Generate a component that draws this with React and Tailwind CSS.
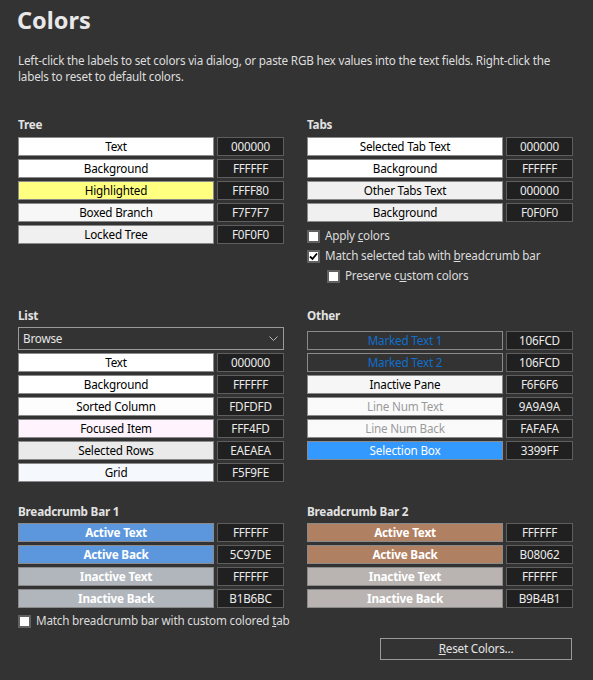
import React from "react";

// Colour swatch data for each group
const treeRows = [
	{ label: "Text", hex: "000000", cls: "bg-white text-black" },
	{ label: "Background", hex: "FFFFFF", cls: "bg-white text-black" },
	{ label: "Highlighted", hex: "FFFF80", cls: "bg-[#ffff80] text-black" },
	{ label: "Boxed Branch", hex: "F7F7F7", cls: "bg-[#f7f7f7] text-black" },
	{ label: "Locked Tree", hex: "F0F0F0", cls: "bg-[#f0f0f0] text-black" },
];

const tabRows = [
	{ label: "Selected Tab Text", hex: "000000", cls: "bg-white text-black" },
	{ label: "Background", hex: "FFFFFF", cls: "bg-white text-black" },
	{ label: "Other Tabs Text", hex: "000000", cls: "bg-[#f0f0f0] text-black" },
	{ label: "Background", hex: "F0F0F0", cls: "bg-[#f0f0f0] text-black" },
];

const listRows = [
	{ label: "Text", hex: "000000", cls: "bg-white text-black" },
	{ label: "Background", hex: "FFFFFF", cls: "bg-white text-black" },
	{ label: "Sorted Column", hex: "FDFDFD", cls: "bg-[#fdfdfd] text-black" },
	{ label: "Focused Item", hex: "FFF4FD", cls: "bg-[#fff4fd] text-black" },
	{ label: "Selected Rows", hex: "EAEAEA", cls: "bg-[#eaeaea] text-black" },
	{ label: "Grid", hex: "F5F9FE", cls: "bg-[#f5f9fe] text-black" },
];

const otherRows = [
	{ label: "Marked Text 1", hex: "106FCD", cls: "bg-[#333333] text-[#106fcd] border-[#5e5e5e]" },
	{ label: "Marked Text 2", hex: "106FCD", cls: "bg-[#333333] text-[#106fcd] border-[#5e5e5e]" },
	{ label: "Inactive Pane", hex: "F6F6F6", cls: "bg-[#f6f6f6] text-black" },
	{ label: "Line Num Text", hex: "9A9A9A", cls: "bg-[#fafafa] text-[#9a9a9a]" },
	{ label: "Line Num Back", hex: "FAFAFA", cls: "bg-[#fafafa] text-[#9a9a9a]" },
	{ label: "Selection Box", hex: "3399FF", cls: "bg-[#3399ff] text-white" },
];

const crumb1Rows = [
	{ label: "Active Text", hex: "FFFFFF", cls: "bg-[#5c97de] text-white font-bold" },
	{ label: "Active Back", hex: "5C97DE", cls: "bg-[#5c97de] text-white font-bold" },
	{ label: "Inactive Text", hex: "FFFFFF", cls: "bg-[#b1b6bc] text-white font-bold" },
	{ label: "Inactive Back", hex: "B1B6BC", cls: "bg-[#b1b6bc] text-white font-bold" },
];

const crumb2Rows = [
	{ label: "Active Text", hex: "FFFFFF", cls: "bg-[#b08062] text-white font-bold" },
	{ label: "Active Back", hex: "B08062", cls: "bg-[#b08062] text-white font-bold" },
	{ label: "Inactive Text", hex: "FFFFFF", cls: "bg-[#b9b4b1] text-white font-bold" },
	{ label: "Inactive Back", hex: "B9B4B1", cls: "bg-[#b9b4b1] text-white font-bold" },
];

// One label button plus its hex text field
const ColorRow = ({ label, hex, cls }) => {
	return (
		<div className="flex gap-[3px] h-[19px]">
			<div
				className={`w-[196px] border border-[#8a8a8a] flex items-center justify-center leading-none ${cls}`}
			>
				{label}
			</div>
			<div className="w-[67px] border border-[#5e5e5e] bg-[#202020] flex items-center justify-center leading-none text-[#ececec]">
				{hex}
			</div>
		</div>
	);
};

const RowList = ({ rows }) => {
	return (
		<div className="flex flex-col gap-[3px]">
			{rows.map((r, i) => (
				<ColorRow key={i} {...r} />
			))}
		</div>
	);
};

const Header = ({ children }) => {
	return (
		<div className="h-[17px] leading-[17px] font-bold text-[#e2e2e2]">
			{children}
		</div>
	);
};

const CheckBox = ({ checked, children, className = "" }) => {
	return (
		<div className={`h-[20px] flex items-center gap-[5px] text-[#dcdcdc] ${className}`}>
			<div className="w-[13px] h-[13px] bg-white border-2 border-[#626262] flex items-center justify-center">
				{checked && (
					<svg width="9" height="9" viewBox="0 0 9 9">
						<polyline
							points="1,4.5 3.5,7 8,1.5"
							fill="none"
							stroke="black"
							strokeWidth="1.8"
						/>
					</svg>
				)}
			</div>
			<span>{children}</span>
		</div>
	);
};

export default function App() {
	return (
		<div className="w-[593px] h-[680px] bg-[#333333] pl-[18px] font-['Segoe_UI','Noto_Sans',sans-serif] text-[11.7px] tracking-[-0.2px] overflow-hidden">
			{/* Title */}
			<div className="mt-[5px] h-[30px] leading-[30px] text-[23.5px] tracking-normal font-bold text-[#e8e8e8] -ml-[1px]">
				Colors
			</div>

			{/* Description */}
			<div className="mt-[17px] leading-[16px] text-[#dedede]">
				Left-click the labels to set colors via dialog, or paste RGB hex values into the text fields. Right-click the
				<br />
				labels to reset to default colors.
			</div>

			{/* Colour groups */}
			<div className="grid grid-cols-[266px_266px] gap-x-[23px] gap-y-[21px] mt-[32px]">
				<div>
					<Header>Tree</Header>
					<div className="mt-[4px]">
						<RowList rows={treeRows} />
					</div>
				</div>

				<div>
					<Header>Tabs</Header>
					<div className="mt-[4px]">
						<RowList rows={tabRows} />
					</div>
					<div className="mt-[4px] flex flex-col">
						<CheckBox>
							Apply <span className="underline">c</span>olors
						</CheckBox>
						<CheckBox checked>
							Match selected tab with <span className="underline">b</span>readcrumb bar
						</CheckBox>
						<CheckBox className="ml-[20px]">
							Preserve c<span className="underline">u</span>stom colors
						</CheckBox>
					</div>
				</div>

				<div>
					<Header>List</Header>
					<div className="mt-[3px] h-[23px] border border-[#9a9a9a] flex items-center justify-between pl-[4px] pr-[5px] text-[#e4e4e4]">
						<span>Browse</span>
						<svg width="9" height="6" viewBox="0 0 9 6">
							<polyline points="0.5,0.5 4.5,4.5 8.5,0.5" fill="none" stroke="#b8b8b8" strokeWidth="1" />
						</svg>
					</div>
					<div className="mt-[3px]">
						<RowList rows={listRows} />
					</div>
				</div>

				<div>
					<Header>Other</Header>
					<div className="mt-[7px]">
						<RowList rows={otherRows} />
					</div>
				</div>

				<div>
					<Header>Breadcrumb Bar 1</Header>
					<div className="mt-[3px]">
						<RowList rows={crumb1Rows} />
					</div>
				</div>

				<div>
					<Header>Breadcrumb Bar 2</Header>
					<div className="mt-[3px]">
						<RowList rows={crumb2Rows} />
					</div>
				</div>
			</div>

			{/* Bottom options */}
			<CheckBox className="mt-[3px]">
				Match breadcrumb bar with custom colored <span className="underline">t</span>ab
			</CheckBox>

			<div className="w-[554px] flex justify-end mt-[7px]">
				<button className="w-[192px] h-[22px] border border-[#9a9a9a] bg-[#333333] text-[#e4e4e4] flex items-center justify-center">
					<span className="underline">R</span>eset Colors...
				</button>
			</div>
		</div>
	);
}
